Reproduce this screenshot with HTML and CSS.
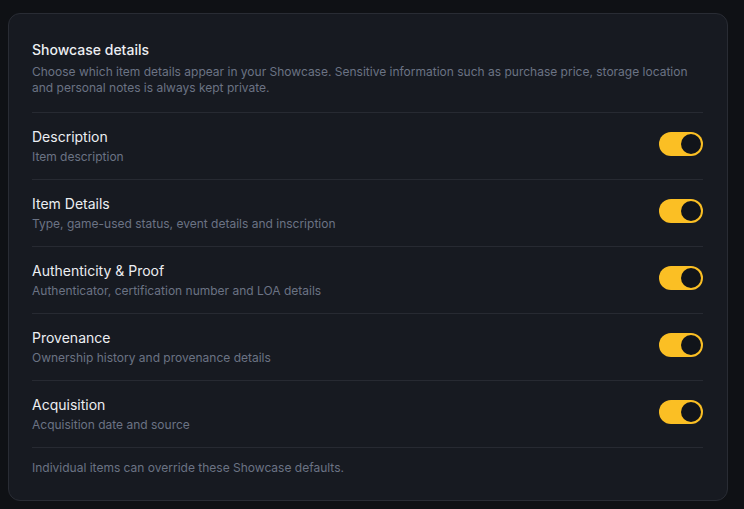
FILE: index.html
```html
<!DOCTYPE html>
<html lang="en">
<head>
    <meta charset="UTF-8">
    <meta name="viewport" content="width=device-width, initial-scale=1.0">
    <title>Showcase details</title>
    <link rel="stylesheet" href="styles.css">
</head>
<body>
    <section class="card">
        <div class="card-header">
            <h2 class="card-title">Showcase details</h2>
            <p class="card-desc">Choose which item details appear in your Showcase. Sensitive information such as purchase price, storage location and personal notes is always kept private.</p>
        </div>

        <div class="setting">
            <div class="setting-text">
                <div class="setting-name">Description</div>
                <div class="setting-hint">Item description</div>
            </div>
            <button class="toggle on" aria-pressed="true"><span class="knob"></span></button>
        </div>
        <div class="setting">
            <div class="setting-text">
                <div class="setting-name">Item Details</div>
                <div class="setting-hint">Type, game-used status, event details and inscription</div>
            </div>
            <button class="toggle on" aria-pressed="true"><span class="knob"></span></button>
        </div>
        <div class="setting">
            <div class="setting-text">
                <div class="setting-name">Authenticity &amp; Proof</div>
                <div class="setting-hint">Authenticator, certification number and LOA details</div>
            </div>
            <button class="toggle on" aria-pressed="true"><span class="knob"></span></button>
        </div>
        <div class="setting">
            <div class="setting-text">
                <div class="setting-name">Provenance</div>
                <div class="setting-hint">Ownership history and provenance details</div>
            </div>
            <button class="toggle on" aria-pressed="true"><span class="knob"></span></button>
        </div>
        <div class="setting">
            <div class="setting-text">
                <div class="setting-name">Acquisition</div>
                <div class="setting-hint">Acquisition date and source</div>
            </div>
            <button class="toggle on" aria-pressed="true"><span class="knob"></span></button>
        </div>

        <p class="card-footer">Individual items can override these Showcase defaults.</p>
    </section>

    <script>
        document.querySelectorAll('.toggle').forEach(function (btn) {
            btn.addEventListener('click', function () {
                btn.classList.toggle('on');
                btn.setAttribute('aria-pressed', btn.classList.contains('on'));
            });
        });
    </script>
</body>
</html>
```

FILE: styles.css
```css
* {
    box-sizing: border-box;
}

body {
    margin: 0;
    background-color: #0f1115;
    font-family: Inter, "Noto Sans", sans-serif;
    color: #e8eaee;
}

.card {
    width: 720px;
    margin: 13px 0 0 8px;
    padding: 24px 24px 24px 23px;
    background: #171a21;
    border: 1px solid #292c34;
    border-radius: 12px;
}

.card-header {
    padding-bottom: 16px;
    border-bottom: 1px solid #272a32;
}

.card-title {
    margin: 0;
    font-size: 14px;
    line-height: 24px;
    font-weight: 500;
    color: #eceef2;
}

.card-desc {
    margin: 2px 0 0;
    font-size: 12px;
    line-height: 16px;
    color: #6b7384;
}

.setting {
    display: flex;
    align-items: flex-start;
    justify-content: space-between;
    padding: 14px 0;
    border-bottom: 1px solid #272a32;
}

.setting-text {
    display: flex;
    flex-direction: column;
    gap: 2px;
}

.setting-name {
    font-size: 14px;
    line-height: 20px;
    font-weight: 400;
    color: #eceef2;
}

.setting-hint {
    font-size: 12px;
    line-height: 16px;
    color: #6b7384;
}

.toggle {
    position: relative;
    width: 44px;
    height: 24px;
    margin-top: 5px;
    padding: 0;
    border: none;
    border-radius: 12px;
    background: #3a3f4a;
    cursor: pointer;
    transition: background 0.2s;
}

.toggle.on {
    background: #fbbf24;
}

.knob {
    position: absolute;
    top: 2px;
    left: 2px;
    width: 20px;
    height: 20px;
    border-radius: 50%;
    background: #11141a;
    transition: left 0.2s;
}

.toggle.on .knob {
    left: 22px;
}

.card-footer {
    margin: 12px 0 0;
    font-size: 12px;
    line-height: 16px;
    color: #6b7384;
}
```
